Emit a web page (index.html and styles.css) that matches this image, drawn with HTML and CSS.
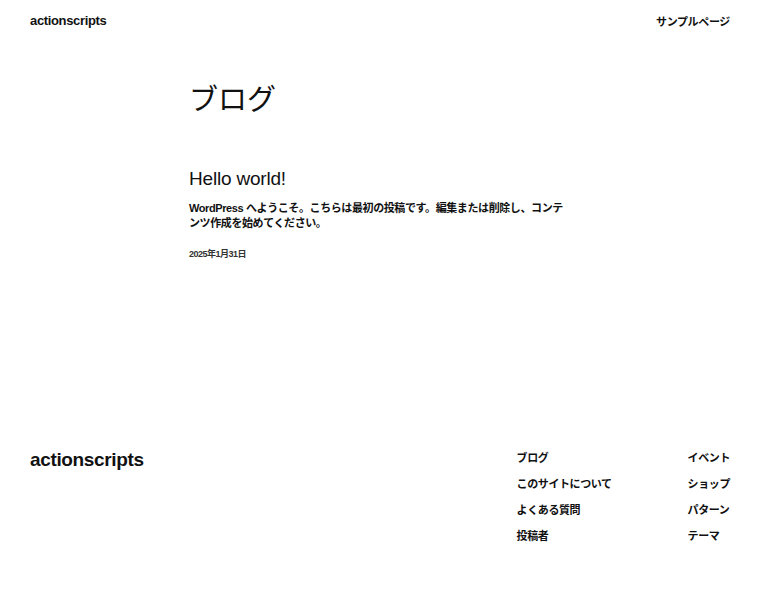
FILE: index.html
```html
<!DOCTYPE html>
<html lang="ja">
<head>
<meta charset="utf-8">
<title>ブログ – actionscripts</title>
<link rel="stylesheet" href="styles.css">
</head>
<body>
<header class="site-header">
  <a class="site-title" href="#">actionscripts</a>
  <nav class="header-nav"><a href="#">サンプルページ</a></nav>
</header>
<main class="content">
  <h1 class="page-title">ブログ</h1>
  <article class="post">
    <h2 class="post-title">Hello world!</h2>
    <p class="post-excerpt">WordPress へようこそ。こちらは最初の投稿です。編集または削除し、コンテンツ作成を始めてください。</p>
    <div class="post-date">2025年1月31日</div>
  </article>
</main>
<footer class="site-footer">
  <a class="footer-title" href="#">actionscripts</a>
  <div class="footer-navs">
    <nav class="footer-col">
      <a href="#">ブログ</a>
      <a href="#">このサイトについて</a>
      <a href="#">よくある質問</a>
      <a href="#">投稿者</a>
    </nav>
    <nav class="footer-col">
      <a href="#">イベント</a>
      <a href="#">ショップ</a>
      <a href="#">パターン</a>
      <a href="#">テーマ</a>
    </nav>
  </div>
</footer>
</body>
</html>
```
FILE: styles.css
```css
* { box-sizing: border-box; }
html, body { margin: 0; padding: 0; background: #fff; }
body {
  font-family: "Liberation Sans", "Noto Sans CJK JP", sans-serif;
  color: #111;
}
a { color: inherit; text-decoration: none; }

.site-header {
  height: 41px;
  padding: 0 30px;
  display: flex;
  align-items: center;
  justify-content: space-between;
}
.site-title {
  font-size: 13px;
  font-weight: 700;
  letter-spacing: -0.35px;
}
.header-nav {
  font-size: 11px;
  font-weight: 600;
  letter-spacing: -0.35px;
}

.content {
  width: 382px;
  margin: 0 auto;
}
.page-title {
  margin: 42px 0 0;
  font-size: 29px;
  line-height: 35px;
  font-weight: 400;
}
.post-title {
  margin: 49px 0 0;
  font-size: 19px;
  line-height: 23px;
  font-weight: 400;
  letter-spacing: -0.2px;
}
.post-excerpt {
  margin: 11px 0 0;
  font-size: 11px;
  line-height: 15px;
  font-weight: 600;
  letter-spacing: -0.4px;
}
.post-date {
  margin-top: 17px;
  font-size: 9px;
  line-height: 12px;
  font-weight: 600;
  letter-spacing: -0.5px;
  color: #333;
}

.site-footer {
  margin-top: 188px;
  padding: 0 30px;
  display: flex;
  justify-content: space-between;
  align-items: flex-start;
}
.footer-title {
  font-size: 19px;
  line-height: 23px;
  font-weight: 700;
  letter-spacing: -0.35px;
}
.footer-navs {
  display: grid;
  grid-template-columns: 171px auto;
  padding-top: 3px;
}
.footer-col {
  display: flex;
  flex-direction: column;
  gap: 11px;
  font-size: 11px;
  line-height: 15px;
  font-weight: 600;
  letter-spacing: -0.4px;
}
```
